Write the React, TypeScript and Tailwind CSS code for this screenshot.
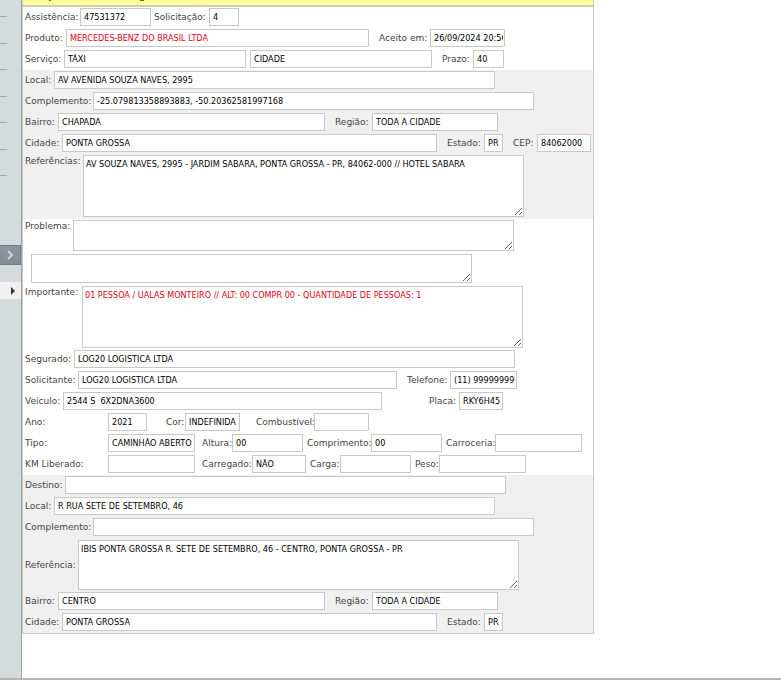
import { ReactNode } from 'react';

interface FieldProps {
  id: string;
  label?: string;
  value?: string;
  labelWidth?: string;
  width: string;
  className?: string;
}

function Field({ id, label, value = '', labelWidth = '', width, className = '' }: FieldProps) {
  return (
    <div className={`flex items-center ${className}`}>
      {label && (
        <label htmlFor={id} className={`shrink-0 whitespace-nowrap ${labelWidth}`}>
          {label}
        </label>
      )}
      <input
        id={id}
        aria-label={label ? undefined : id}
        defaultValue={value}
        className={`h-[18px] shrink-0 border border-[#c8c8c8] bg-white pr-px pl-[3px] font-['DejaVu_Sans_Condensed','DejaVu_Sans',sans-serif] text-[9px] outline-none ${
          id === 'produto' ? 'text-[#e00010]' : 'text-black'
        } ${width}`}
      />
    </div>
  );
}

interface AreaProps extends FieldProps {
  height: string;
}

function Area({ id, label, value = '', labelWidth = '', width, height, className = '' }: AreaProps) {
  return (
    <div className={`flex ${className}`}>
      {label && (
        <label htmlFor={id} className={`shrink-0 whitespace-nowrap ${labelWidth}`}>
          {label}
        </label>
      )}
      <textarea
        id={id}
        aria-label={label ? undefined : id}
        defaultValue={value}
        className={`block shrink-0 resize border border-[#c8c8c8] bg-white p-[2px] font-['DejaVu_Sans_Condensed','DejaVu_Sans',sans-serif] text-[9px] leading-3 outline-none ${
          id === 'importante' ? 'text-[#e00010]' : 'text-black'
        } ${width} ${height}`}
      />
    </div>
  );
}

function Row({ children }: { children: ReactNode }) {
  return <div className="flex h-[21px] items-start pt-px">{children}</div>;
}

function Sidebar() {
  return (
    <aside className="flex w-[22px] shrink-0 flex-col border-r border-[#a0a3a6] bg-[#d5dadd]">
      <div className="mt-4 mb-[69px] flex h-40 flex-col justify-between">
        {[0, 1, 2, 3, 4, 5, 6].map((n) => (
          <div key={n} className="h-px w-[7px] bg-[#a6aaad]" />
        ))}
      </div>
      <button
        aria-label="Expandir"
        className="flex h-5 items-center justify-end border border-l-0 border-[#757c86] bg-linear-to-b from-[#8f96a0] to-[#858c97] pr-[6px]"
      >
        <svg viewBox="0 0 7 10" className="h-[10px] w-[7px] fill-none stroke-[#d0d5da] stroke-2">
          <path d="M1 1L5 5L1 9" />
        </svg>
      </button>
      <button aria-label="Abrir menu" className="mt-[17px] flex h-[17px] items-center justify-end bg-[#f0f0f0] pr-[6px]">
        <svg viewBox="0 0 4 8" className="h-2 w-1 fill-[#333]">
          <path d="M0 0L4 4L0 8Z" />
        </svg>
      </button>
    </aside>
  );
}

export default function App() {
  return (
    <div className="flex min-h-screen flex-col overflow-x-hidden bg-white font-['DejaVu_Sans',sans-serif] text-[9px] leading-3 text-[#444]">
      <div className="flex flex-1">
        <Sidebar />
        <main className="min-w-0 flex-1">
          <form className="w-[572px] border-x border-b border-[#c8c8c8]">
            {/* Faixa do título, com as hastes das letras rente ao topo */}
            <div className="h-[7px] border-b-2 border-[#ccccb8] bg-[#ffff99]">
              <svg viewBox="0 0 130 2" className="h-[2px] w-[130px] fill-[#66663d]">
                <path d="M26 0h2v1h-2zM117 0h4v1h-4z" />
              </svg>
            </div>

            {/* Atendimento */}
            <section className="pl-[2px]">
              <Row>
                <Field id="assistencia" label="Assistência:" value="47531372" labelWidth="w-[55px]" width="w-[71px]" />
                <Field id="solicitacao" label="Solicitação:" value="4" labelWidth="w-[55px]" width="w-[30px]" className="ml-[3px]" />
              </Row>
              <Row>
                <Field id="produto" label="Produto:" value="MERCEDES-BENZ DO BRASIL LTDA" labelWidth="w-[41px]" width="w-[303px]" />
                <Field id="aceito" label="Aceito em:" value="26/09/2024 20:56" labelWidth="w-[51px]" width="w-[75px]" className="ml-[10px]" />
              </Row>
              <Row>
                <Field id="servico" label="Serviço:" value="TÁXI" labelWidth="w-[39px]" width="w-[182px]" />
                <Field id="cidade-servico" value="CIDADE" width="w-[182px]" className="ml-1" />
                <Field id="prazo" label="Prazo:" value="40" labelWidth="w-[31px]" width="w-[31px]" className="ml-[10px]" />
              </Row>
            </section>

            {/* Origem */}
            <section className="bg-[#f0f0f0] pb-[2px] pl-[2px]">
              <Row>
                <Field id="local" label="Local:" value="AV AVENIDA SOUZA NAVES, 2995" labelWidth="w-[29px]" width="w-[441px]" />
              </Row>
              <Row>
                <Field id="complemento" label="Complemento:" value="-25.079813358893883, -50.20362581997168" labelWidth="w-[68px]" width="w-[441px]" />
              </Row>
              <Row>
                <Field id="bairro" label="Bairro:" value="CHAPADA" labelWidth="w-[33px]" width="w-[267px]" />
                <Field id="regiao" label="Região:" value="TODA A CIDADE" labelWidth="w-[37px]" width="w-[126px]" className="ml-[10px]" />
              </Row>
              <Row>
                <Field id="cidade" label="Cidade:" value="PONTA GROSSA" labelWidth="w-[37px]" width="w-[375px]" />
                <Field id="estado" label="Estado:" value="PR" labelWidth="w-[37px]" width="w-[19px]" className="ml-[10px]" />
                <Field id="cep" label="CEP:" value="84062000" labelWidth="w-[24px]" width="w-[54px]" className="ml-[10px]" />
              </Row>
              <Area
                id="referencias"
                label="Referências:"
                value="AV SOUZA NAVES, 2995 - JARDIM SABARA, PONTA GROSSA - PR, 84062-000 // HOTEL SABARA"
                labelWidth="w-[58px]"
                width="w-[441px]"
                height="h-[62px]"
                className="pt-px"
              />
            </section>

            {/* Ocorrência */}
            <section className="pl-[2px]">
              <Area id="problema" label="Problema:" labelWidth="w-[48px]" width="w-[441px]" height="h-[31px]" className="pt-px" />
              <Area id="detalhe" width="w-[441px]" height="h-[29px]" className="pt-[3px] pl-[6px]" />
              <Area
                id="importante"
                label="Importante:"
                value="01 PESSOA / UALAS MONTEIRO // ALT: 00 COMPR 00 - QUANTIDADE DE PESSOAS: 1"
                labelWidth="w-[57px]"
                width="w-[441px]"
                height="h-[62px]"
                className="pt-[3px] pb-px"
              />
              <Row>
                <Field id="segurado" label="Segurado:" value="LOG20 LOGISTICA LTDA" labelWidth="w-[49px]" width="w-[441px]" />
              </Row>
              <Row>
                <Field id="solicitante" label="Solicitante:" value="LOG20 LOGISTICA LTDA" labelWidth="w-[53px]" width="w-[319px]" />
                <Field id="telefone" label="Telefone:" value="(11) 999999999" labelWidth="w-[43px]" width="w-[67px]" className="ml-[10px]" />
              </Row>
              <Row>
                <Field id="veiculo" label="Veículo:" value="2544 S  6X2DNA3600" labelWidth="w-[38px]" width="w-[319px]" />
                <Field id="placa" label="Placa:" value="RKY6H45" labelWidth="w-[30px]" width="w-[44px]" className="ml-[47px]" />
              </Row>
              <Row>
                <Field id="ano" label="Ano:" value="2021" labelWidth="w-[83px]" width="w-[39px]" />
                <Field id="cor" label="Cor:" value="INDEFINIDA" labelWidth="w-[19px]" width="w-[55px]" className="ml-[19px]" />
                <Field id="combustivel" label="Combustível:" labelWidth="w-[58px]" width="w-[55px]" className="ml-[16px]" />
              </Row>
              <Row>
                <Field id="tipo" label="Tipo:" value="CAMINHÃO ABERTO" labelWidth="w-[83px]" width="w-[87px]" />
                <Field id="altura" label="Altura:" value="00" labelWidth="w-[30px]" width="w-[71px]" className="ml-[7px]" />
                <Field id="comprimento" label="Comprimento:" value="00" labelWidth="w-[64px]" width="w-[71px]" className="ml-1" />
                <Field id="carroceria" label="Carroceria:" labelWidth="w-[49px]" width="w-[87px]" className="ml-1" />
              </Row>
              <Row>
                <Field id="km" label="KM Liberado:" labelWidth="w-[83px]" width="w-[87px]" />
                <Field id="carregado" label="Carregado:" value="NÃO" labelWidth="w-[50px]" width="w-[54px]" className="ml-[7px]" />
                <Field id="carga" label="Carga:" labelWidth="w-[30px]" width="w-[71px]" className="ml-1" />
                <Field id="peso" label="Peso:" labelWidth="w-[24px]" width="w-[87px]" className="ml-1" />
              </Row>
            </section>

            {/* Destino */}
            <section className="bg-[#f0f0f0] pl-[2px]">
              <Row>
                <Field id="destino" label="Destino:" labelWidth="w-[40px]" width="w-[441px]" />
              </Row>
              <Row>
                <Field id="destino-local" label="Local:" value="R RUA SETE DE SETEMBRO, 46" labelWidth="w-[29px]" width="w-[441px]" />
              </Row>
              <Row>
                <Field id="destino-complemento" label="Complemento:" labelWidth="w-[68px]" width="w-[441px]" />
              </Row>
              <Area
                id="destino-referencia"
                label="Referência:"
                value="IBIS PONTA GROSSA R. SETE DE SETEMBRO, 46 - CENTRO, PONTA GROSSA - PR"
                labelWidth="w-[53px]"
                width="w-[441px]"
                height="h-[50px]"
                className="items-center pt-[2px] pb-px"
              />
              <Row>
                <Field id="destino-bairro" label="Bairro:" value="CENTRO" labelWidth="w-[33px]" width="w-[267px]" />
                <Field id="destino-regiao" label="Região:" value="TODA A CIDADE" labelWidth="w-[37px]" width="w-[126px]" className="ml-[10px]" />
              </Row>
              <Row>
                <Field id="destino-cidade" label="Cidade:" value="PONTA GROSSA" labelWidth="w-[37px]" width="w-[375px]" />
                <Field id="destino-estado" label="Estado:" value="PR" labelWidth="w-[37px]" width="w-[19px]" className="ml-[10px]" />
              </Row>
            </section>
          </form>
        </main>
      </div>
      <div className="h-[2px] bg-[#b4b4b4]" />
    </div>
  );
}
